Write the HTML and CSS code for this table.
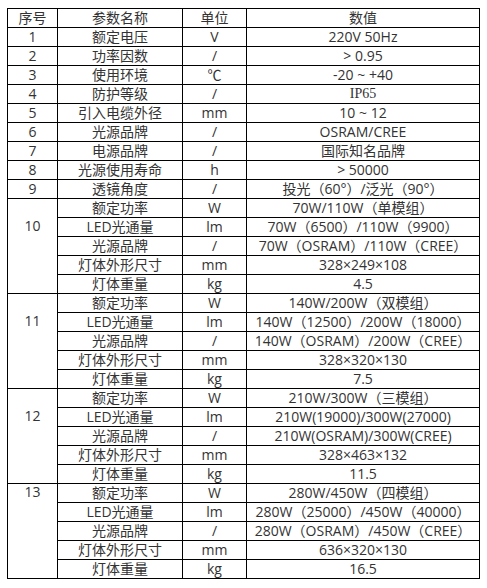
FILE: index.html
```html
<!DOCTYPE html>
<html lang="zh">
<head>
<meta charset="utf-8">
<link rel="stylesheet" href="styles.css">
</head>
<body>
<table class="spec">
  <colgroup>
    <col class="c-no"><col class="c-name"><col class="c-unit"><col class="c-val">
  </colgroup>
  <thead>
    <tr><th>序号</th><th>参数名称</th><th>单位</th><th>数值</th></tr>
  </thead>
  <tbody>
    <tr><td>1</td><td>额定电压</td><td>V</td><td>220V 50Hz</td></tr>
    <tr><td>2</td><td>功率因数</td><td>/</td><td>&gt; 0.95</td></tr>
    <tr><td>3</td><td>使用环境</td><td>℃</td><td>-20 ~ +40</td></tr>
    <tr><td>4</td><td>防护等级</td><td>/</td><td class="serif">IP65</td></tr>
    <tr><td>5</td><td>引入电缆外径</td><td>mm</td><td>10 ~ 12</td></tr>
    <tr><td>6</td><td>光源品牌</td><td>/</td><td>OSRAM/CREE</td></tr>
    <tr><td>7</td><td>电源品牌</td><td>/</td><td>国际知名品牌</td></tr>
    <tr><td>8</td><td>光源使用寿命</td><td>h</td><td>&gt; 50000</td></tr>
    <tr><td>9</td><td>透镜角度</td><td>/</td><td>投光（60°）/泛光（90°）</td></tr>

    <tr><td rowspan="5" class="group">10</td><td>额定功率</td><td>W</td><td>70W/110W（单模组）</td></tr>
    <tr><td>LED光通量</td><td>lm</td><td>70W（6500）/110W（9900）</td></tr>
    <tr><td>光源品牌</td><td>/</td><td>70W（OSRAM）/110W（CREE）</td></tr>
    <tr><td>灯体外形尺寸</td><td>mm</td><td>328×249×108</td></tr>
    <tr><td>灯体重量</td><td>kg</td><td>4.5</td></tr>

    <tr><td rowspan="5" class="group">11</td><td>额定功率</td><td>W</td><td>140W/200W（双模组）</td></tr>
    <tr><td>LED光通量</td><td>lm</td><td>140W（12500）/200W（18000）</td></tr>
    <tr><td>光源品牌</td><td>/</td><td>140W（OSRAM）/200W（CREE）</td></tr>
    <tr><td>灯体外形尺寸</td><td>mm</td><td>328×320×130</td></tr>
    <tr><td>灯体重量</td><td>kg</td><td>7.5</td></tr>

    <tr><td rowspan="5" class="group">12</td><td>额定功率</td><td>W</td><td>210W/300W（三模组）</td></tr>
    <tr><td>LED光通量</td><td>lm</td><td>210W(19000)/300W(27000)</td></tr>
    <tr><td>光源品牌</td><td>/</td><td>210W(OSRAM)/300W(CREE)</td></tr>
    <tr><td>灯体外形尺寸</td><td>mm</td><td>328×463×132</td></tr>
    <tr><td>灯体重量</td><td>kg</td><td>11.5</td></tr>

    <tr><td rowspan="5" class="group group-top">13</td><td>额定功率</td><td>W</td><td>280W/450W（四模组）</td></tr>
    <tr><td>LED光通量</td><td>lm</td><td>280W（25000）/450W（40000）</td></tr>
    <tr><td>光源品牌</td><td>/</td><td>280W（OSRAM）/450W（CREE）</td></tr>
    <tr><td>灯体外形尺寸</td><td>mm</td><td>636×320×130</td></tr>
    <tr><td>灯体重量</td><td>kg</td><td>16.5</td></tr>
  </tbody>
</table>
</body>
</html>
```
FILE: styles.css
```css
html, body {
  margin: 0;
  padding: 0;
  background: #ffffff;
}

body {
  font-family: "Open Sans", "Noto Sans CJK SC", sans-serif;
  font-size: 14px;
  color: #333333;
}

.spec {
  border-collapse: collapse;
  table-layout: fixed;
  width: 472px;
  margin: 8px 0 0 7px;
}

.c-no { width: 50px; }
.c-name { width: 125px; }
.c-unit { width: 64px; }
.c-val { width: 233px; }

.spec tr {
  height: 18px;
}

.spec th,
.spec td {
  border: 1px solid #000;
  padding: 0;
  height: 18px;
  line-height: 16px;
  text-align: center;
  vertical-align: middle;
  font-weight: normal;
  white-space: nowrap;
  overflow: hidden;
}

.spec td.serif {
  font-family: "Liberation Serif", "Noto Sans CJK SC", serif;
}

.spec td.group {
  vertical-align: top;
  padding-top: 19px;
}

.spec td.group-top {
  padding-top: 0;
}
```
